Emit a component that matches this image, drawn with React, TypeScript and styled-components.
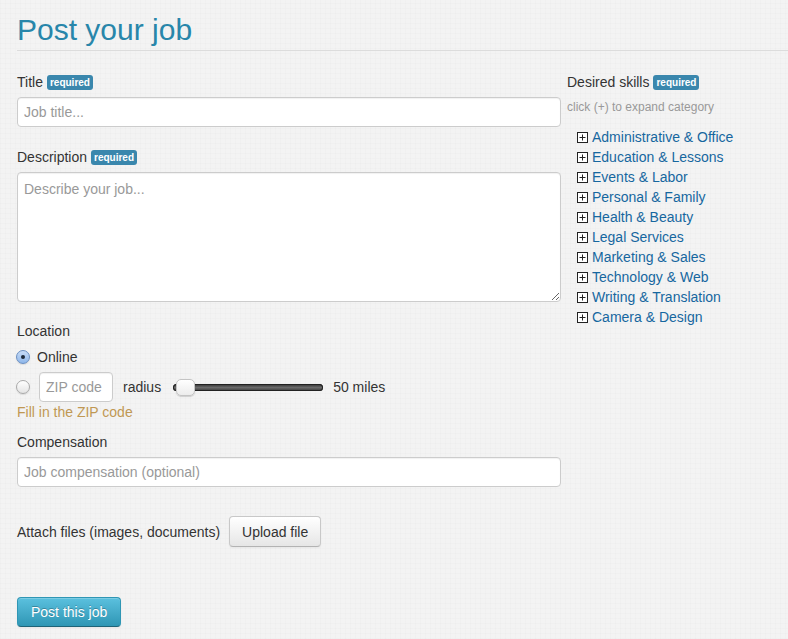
import { createGlobalStyle } from "styled-components";
import styled from "styled-components";

const GlobalStyle = createGlobalStyle`
  html, body {
    margin: 0;
    padding: 0;
  }
  body {
    font-family: "Liberation Sans", Arial, sans-serif;
    font-size: 14px;
    color: #333;
    background-color: #f3f3f3;
    background-image:
      repeating-linear-gradient(0deg, rgba(0, 0, 0, 0.011) 0 1px, transparent 1px 5px),
      repeating-linear-gradient(90deg, rgba(0, 0, 0, 0.011) 0 1px, transparent 1px 5px);
    min-height: 639px;
  }
`;

const Page = styled.div`
  padding-left: 17px;
`;

const Heading = styled.h1`
  margin: 0;
  padding: 12px 0 2px;
  font-size: 30px;
  line-height: 36px;
  font-weight: normal;
  color: #2886aa;
  border-bottom: 1px solid #dcdcdc;
`;

const Columns = styled.div`
  display: flex;
  gap: 6px;
  margin-top: 21px;
`;

const LeftColumn = styled.div`
  width: 544px;
  display: flex;
  flex-direction: column;
`;

const RightColumn = styled.div`
  flex: 1;
  display: flex;
  flex-direction: column;
`;

const Label = styled.div<{ $top?: number }>`
  display: flex;
  align-items: center;
  gap: 4px;
  height: 20px;
  line-height: 20px;
  margin-top: ${(p) => p.$top ?? 0}px;
  color: #333;
`;

const Badge = styled.span`
  display: inline-block;
  background: #3a87ad;
  color: #fff;
  font-size: 10px;
  font-weight: bold;
  line-height: 15px;
  padding: 0 3px;
  border-radius: 3px;
`;

const TextInput = styled.input<{ $width?: number }>`
  box-sizing: border-box;
  height: 30px;
  width: ${(p) => (p.$width ? `${p.$width}px` : "100%")};
  margin-top: 5px;
  padding: 0 6px;
  border: 1px solid #cccccc;
  border-radius: 4px;
  background: #fff;
  font-family: inherit;
  font-size: 14px;
  color: #555;
  box-shadow: inset 0 1px 1px rgba(0, 0, 0, 0.06);
  &::placeholder {
    color: #999;
  }
`;

const TextArea = styled.textarea`
  box-sizing: border-box;
  width: 100%;
  height: 130px;
  margin: 5px 0 0;
  padding: 6px 6px;
  border: 1px solid #cccccc;
  border-radius: 4px;
  background: #fff;
  font-family: inherit;
  font-size: 14px;
  line-height: 20px;
  color: #555;
  display: block;
  box-shadow: inset 0 1px 1px rgba(0, 0, 0, 0.06);
  &::placeholder {
    color: #999;
  }
`;

const RadioRow = styled.div<{ $top: number; $height: number }>`
  display: flex;
  align-items: center;
  height: ${(p) => p.$height}px;
  margin-top: ${(p) => p.$top}px;
`;

const Radio = styled.span<{ $checked?: boolean }>`
  position: relative;
  box-sizing: border-box;
  width: 14px;
  height: 14px;
  margin-left: -1px;
  border-radius: 50%;
  flex-shrink: 0;
  border: 1px solid ${(p) => (p.$checked ? "#6a8fc2" : "#a9a9a9")};
  background: ${(p) =>
    p.$checked
      ? "linear-gradient(#c8dcf7, #8fb7ea)"
      : "linear-gradient(#ffffff, #e4e4e4)"};
  box-shadow: 0 1px 1px rgba(0, 0, 0, 0.1);
  &::after {
    content: "";
    display: ${(p) => (p.$checked ? "block" : "none")};
    position: absolute;
    left: 4px;
    top: 4px;
    width: 4px;
    height: 4px;
    border-radius: 50%;
    background: #1e2a3a;
  }
`;

const RadioText = styled.span`
  margin-left: 7px;
`;

const ZipInput = styled(TextInput)`
  margin: 0 0 0 9px;
`;

const InlineText = styled.span<{ $left: number }>`
  margin-left: ${(p) => p.$left}px;
`;

const Slider = styled.div`
  position: relative;
  width: 150px;
  height: 7px;
  margin-left: 12px;
  border-radius: 4px;
  background: linear-gradient(#2e2e2e, #6a6a6a 50%, #3a3a3a);
  box-shadow: inset 0 0 0 1px #222;
`;

const SliderThumb = styled.span`
  position: absolute;
  left: 3px;
  top: -5px;
  width: 19px;
  height: 17px;
  box-sizing: border-box;
  border-radius: 5px;
  border: 1px solid #c4c4c4;
  background: linear-gradient(#ffffff, #ececec);
  box-shadow: 0 1px 1px rgba(0, 0, 0, 0.15);
`;

const WarningText = styled.div`
  height: 20px;
  line-height: 20px;
  color: #c09853;
`;

const AttachRow = styled.div`
  display: flex;
  align-items: center;
  gap: 9px;
  margin-top: 29px;
`;

const Button = styled.button`
  box-sizing: border-box;
  height: 31px;
  padding: 0 12px;
  font-family: inherit;
  font-size: 14px;
  color: #333;
  border: 1px solid #c8c8c8;
  border-bottom-color: #b3b3b3;
  border-radius: 4px;
  background: linear-gradient(#ffffff, #e6e6e6);
  box-shadow: inset 0 1px 0 rgba(255, 255, 255, 0.2), 0 1px 2px rgba(0, 0, 0, 0.05);
`;

const SubmitButton = styled(Button)`
  align-self: flex-start;
  height: 30px;
  margin-top: 50px;
  padding: 0 13px;
  color: #fff;
  border-color: #2f96b4 #2f96b4 #1f6377;
  background: linear-gradient(#5bc0de, #2f96b4);
  text-shadow: 0 -1px 0 rgba(0, 0, 0, 0.25);
`;

const Hint = styled.div`
  margin-top: 5px;
  height: 20px;
  line-height: 20px;
  font-size: 12px;
  color: #999;
`;

const CategoryList = styled.ul`
  list-style: none;
  margin: 10px 0 0;
  padding: 0 0 0 10px;
`;

const CategoryItem = styled.li`
  display: flex;
  align-items: center;
  gap: 4px;
  height: 20px;
  line-height: 20px;
`;

const CategoryLink = styled.a`
  color: #16679f;
  text-decoration: none;
`;

const PlusBox = () => (
  <svg width="11" height="11" viewBox="0 0 11 11">
    <rect x="0.5" y="0.5" width="10" height="10" fill="#fff" stroke="#222" />
    <path d="M2.5 5.5h6M5.5 2.5v6" stroke="#222" />
  </svg>
);

const categories = [
  "Administrative & Office",
  "Education & Lessons",
  "Events & Labor",
  "Personal & Family",
  "Health & Beauty",
  "Legal Services",
  "Marketing & Sales",
  "Technology & Web",
  "Writing & Translation",
  "Camera & Design",
];

export default function App() {
  return (
    <Page>
      <GlobalStyle />
      <Heading>Post your job</Heading>
      <Columns>
        <LeftColumn>
          <Label>
            Title <Badge>required</Badge>
          </Label>
          <TextInput placeholder="Job title..." />

          <Label $top={20}>
            Description <Badge>required</Badge>
          </Label>
          <TextArea placeholder="Describe your job..." />

          <Label $top={19}>Location</Label>
          <RadioRow $top={6} $height={20}>
            <Radio $checked />
            <RadioText>Online</RadioText>
          </RadioRow>
          <RadioRow $top={5} $height={30}>
            <Radio />
            <ZipInput $width={74} placeholder="ZIP code" />
            <InlineText $left={10}>radius</InlineText>
            <Slider>
              <SliderThumb />
            </Slider>
            <InlineText $left={10}>50 miles</InlineText>
          </RadioRow>
          <WarningText>Fill in the ZIP code</WarningText>

          <Label $top={10}>Compensation</Label>
          <TextInput placeholder="Job compensation (optional)" />

          <AttachRow>
            <span>Attach files (images, documents)</span>
            <Button>Upload file</Button>
          </AttachRow>

          <SubmitButton>Post this job</SubmitButton>
        </LeftColumn>

        <RightColumn>
          <Label>
            Desired skills <Badge>required</Badge>
          </Label>
          <Hint>click (+) to expand category</Hint>
          <CategoryList>
            {categories.map((c) => (
              <CategoryItem key={c}>
                <PlusBox />
                <CategoryLink href="#">{c}</CategoryLink>
              </CategoryItem>
            ))}
          </CategoryList>
        </RightColumn>
      </Columns>
    </Page>
  );
}
